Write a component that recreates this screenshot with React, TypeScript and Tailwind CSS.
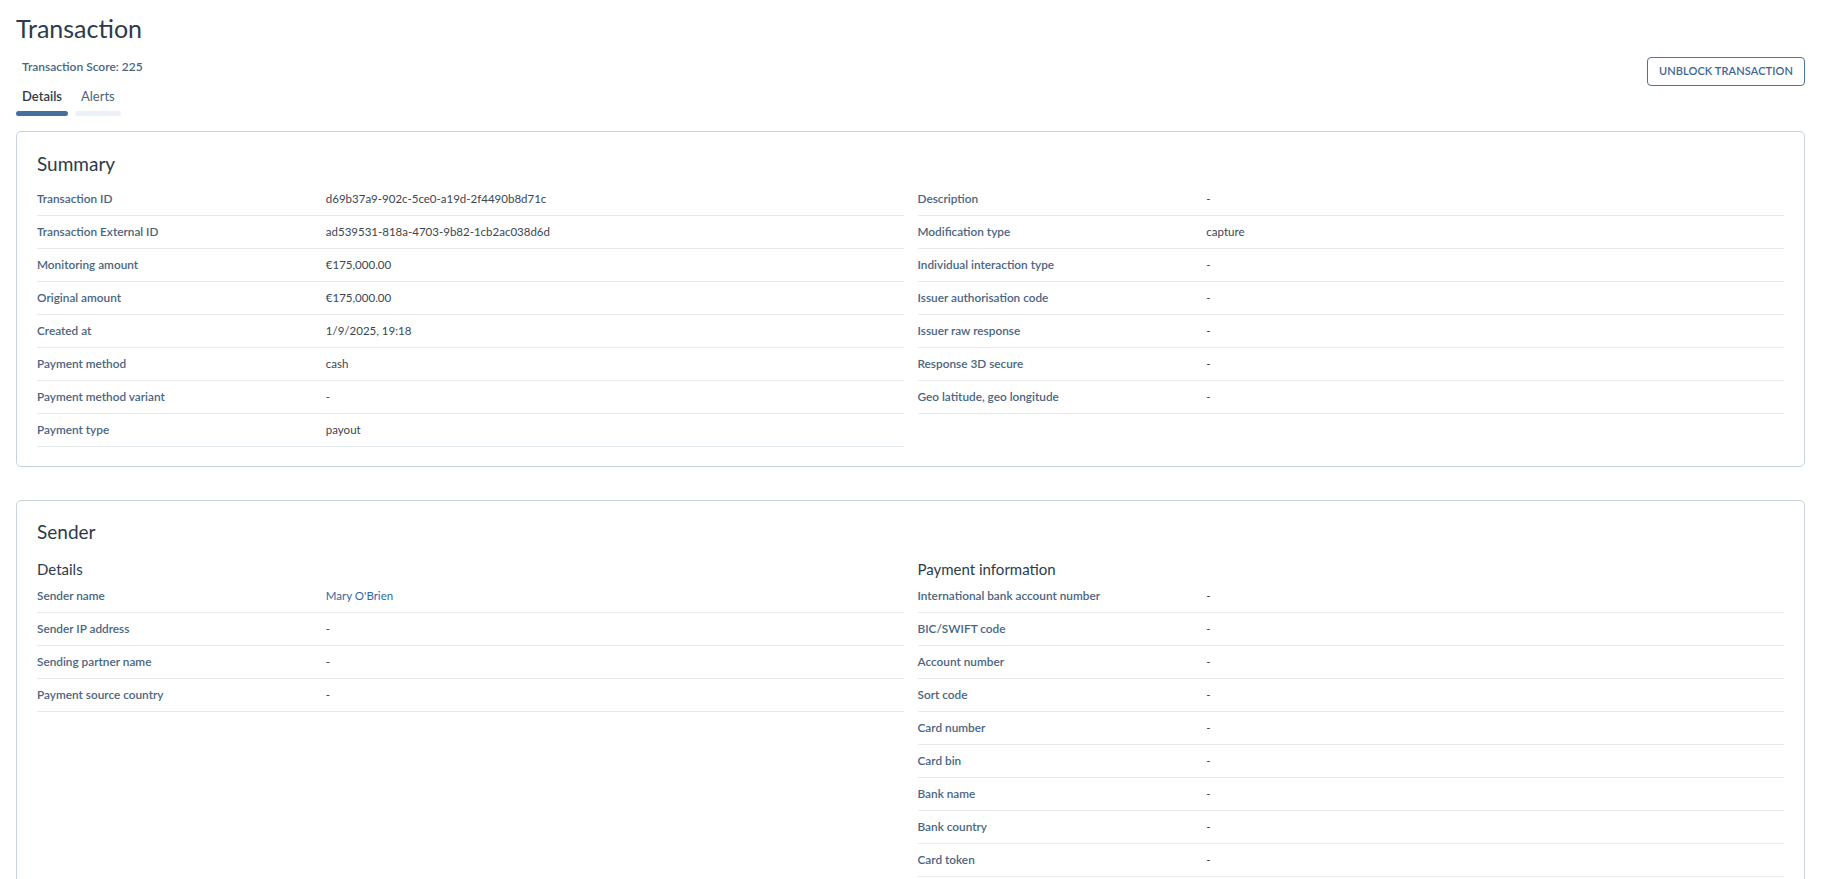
import React from 'react';

type Row = { label: string; value: string; link?: boolean };

const summaryLeft: Row[] = [
  { label: 'Transaction ID', value: 'd69b37a9-902c-5ce0-a19d-2f4490b8d71c' },
  { label: 'Transaction External ID', value: 'ad539531-818a-4703-9b82-1cb2ac038d6d' },
  { label: 'Monitoring amount', value: '€175,000.00' },
  { label: 'Original amount', value: '€175,000.00' },
  { label: 'Created at', value: '1/9/2025, 19:18' },
  { label: 'Payment method', value: 'cash' },
  { label: 'Payment method variant', value: '-' },
  { label: 'Payment type', value: 'payout' },
];

const summaryRight: Row[] = [
  { label: 'Description', value: '-' },
  { label: 'Modification type', value: 'capture' },
  { label: 'Individual interaction type', value: '-' },
  { label: 'Issuer authorisation code', value: '-' },
  { label: 'Issuer raw response', value: '-' },
  { label: 'Response 3D secure', value: '-' },
  { label: 'Geo latitude, geo longitude', value: '-' },
];

const senderDetails: Row[] = [
  { label: 'Sender name', value: "Mary O'Brien", link: true },
  { label: 'Sender IP address', value: '-' },
  { label: 'Sending partner name', value: '-' },
  { label: 'Payment source country', value: '-' },
];

const paymentInfo: Row[] = [
  { label: 'International bank account number', value: '-' },
  { label: 'BIC/SWIFT code', value: '-' },
  { label: 'Account number', value: '-' },
  { label: 'Sort code', value: '-' },
  { label: 'Card number', value: '-' },
  { label: 'Card bin', value: '-' },
  { label: 'Bank name', value: '-' },
  { label: 'Bank country', value: '-' },
  { label: 'Card token', value: '-' },
];

function DataList({ rows }: { rows: Row[] }) {
  return (
    <div>
      {rows.map((row) => (
        <div key={row.label} className="flex h-[33px] items-center border-b border-[#e6ebf0]">
          <div className="w-1/3 text-[11.8px] font-semibold text-[#4a6582]">{row.label}</div>
          <div className={row.link ? 'flex-1 text-[11.5px] text-[#2f68a8]' : 'flex-1 text-[11.5px] text-[#3a4654]'}>
            {row.value}
          </div>
        </div>
      ))}
    </div>
  );
}

export default function App() {
  return (
    <div className="min-h-screen bg-white pb-10 pl-4 pr-6 font-['Lato',sans-serif]">
      {/* Header */}
      <h1 className="pt-[11px] text-[25px] leading-[34px] text-[#2c3b4c]">Transaction</h1>
      <div className="flex items-start justify-between">
        <div>
          <div className="mt-[14px] pl-[6px] text-[12px] font-semibold leading-[16px] text-[#4a6582]">
            Transaction Score: 225
          </div>
          <div className="mt-[13px] flex gap-[7px]">
            <div className="flex flex-col">
              <span className="px-[6px] text-[13px] font-semibold leading-[16px] text-[#2c3b4c]">Details</span>
              <span className="mt-[7px] h-[5px] rounded-full bg-[#44709f]" />
            </div>
            <div className="flex flex-col">
              <span className="px-[6px] text-[13px] leading-[16px] text-[#4a6582]">Alerts</span>
              <span className="mt-[7px] h-[5px] rounded-full bg-[#edf1f5]" />
            </div>
          </div>
        </div>
        <button className="mt-[12px] h-[29px] rounded-[4px] border border-[#4a74a3] px-[11px] text-[11px] font-semibold tracking-[0.1px] text-[#3d6696]">
          UNBLOCK TRANSACTION
        </button>
      </div>

      {/* Summary */}
      <section className="mt-[15px] rounded-[5px] border border-[#c8d3de] px-5 pb-[19px] pt-[20px]">
        <h2 className="text-[19px] leading-[24px] text-[#2c3b4c]">Summary</h2>
        <div className="mt-[7px] grid grid-cols-2 gap-x-[14px]">
          <DataList rows={summaryLeft} />
          <DataList rows={summaryRight} />
        </div>
      </section>

      {/* Sender */}
      <section className="mt-[33px] rounded-[5px] border border-[#c8d3de] px-5 pb-[18px] pt-[19px]">
        <h2 className="text-[19px] leading-[24px] text-[#2c3b4c]">Sender</h2>
        <div className="mt-[15px] grid grid-cols-2 gap-x-[14px]">
          <div>
            <h3 className="text-[15px] leading-[21px] text-[#2c3b4c]">Details</h3>
            <DataList rows={senderDetails} />
          </div>
          <div>
            <h3 className="text-[15px] leading-[21px] text-[#2c3b4c]">Payment information</h3>
            <DataList rows={paymentInfo} />
          </div>
        </div>
      </section>
    </div>
  );
}
